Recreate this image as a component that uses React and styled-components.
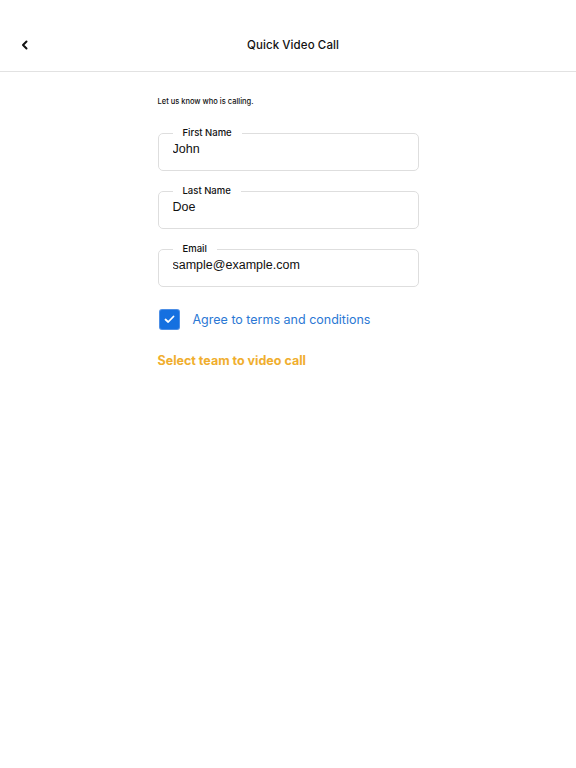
import React from 'react';
import styled, { createGlobalStyle } from 'styled-components';

const GlobalStyle = createGlobalStyle`
    html, body {
        margin: 0;
        padding: 0;
        background: #fff;
    }
    body {
        font-family: Inter, "Noto Sans", sans-serif;
        color: #111;
    }
`;

const Page = styled.div`
    width: 576px;
    min-height: 768px;
    background: #fff;
`;

const Header = styled.header`
    position: relative;
    display: flex;
    align-items: center;
    justify-content: center;
    height: 52px;
    padding-top: 19px;
    border-bottom: 1px solid #e2e2e2;
`;

const BackButton = styled.button`
    position: absolute;
    left: 17px;
    top: 37px;
    display: flex;
    align-items: center;
    justify-content: center;
    width: 16px;
    height: 16px;
    padding: 0;
    border: none;
    background: none;
    color: #111;
`;

const Title = styled.h1`
    margin: 0;
    font-size: 11.5px;
    font-weight: 500;
    letter-spacing: 0.1px;
    padding-left: 10px;
`;

const Content = styled.main`
    display: flex;
    flex-direction: column;
    width: 261px;
    margin: 0 auto;
    padding-top: 25px;
`;

const Intro = styled.p`
    margin: 0 0 22px;
    font-size: 7.5px;
    font-weight: 500;
`;

const Field = styled.fieldset`
    margin: 0 0 15px;
    padding: 0 14px 10px;
    height: 43px;
    box-sizing: border-box;
    border: 1.5px solid #dedede;
    border-radius: 5px;
    display: flex;
    flex-direction: column;
`;

const Legend = styled.legend`
    padding: 0 10px;
    margin-left: 0;
    font-size: 9.5px;
    font-weight: 500;
    line-height: 10px;
`;

const Input = styled.input`
    border: none;
    outline: none;
    padding: 0;
    margin-top: 4px;
    font-family: "Liberation Sans", Arial, sans-serif;
    font-size: 12.5px;
    color: #111;
    background: transparent;
`;

const CheckRow = styled.label`
    display: flex;
    align-items: center;
    gap: 14px;
    margin-top: 8px;
    padding-left: 2px;
`;

const CheckBox = styled.span`
    display: flex;
    align-items: center;
    justify-content: center;
    width: 19px;
    height: 19px;
    border-radius: 2px;
    background: #1570e0;
    box-shadow: 0 0 0 1px #4d8fe6;
`;

const CheckText = styled.span`
    font-size: 12.5px;
    color: #2b78d4;
`;

const TeamLink = styled.a`
    margin-top: 24px;
    font-size: 12.5px;
    font-weight: 700;
    color: #f0ae2e;
    text-decoration: none;
`;

const fields = [
    { label: 'First Name', value: 'John' },
    { label: 'Last Name', value: 'Doe' },
    { label: 'Email', value: 'sample@example.com' },
];

export default function App() {
    return (
        <Page>
            <GlobalStyle />
            <Header>
                <BackButton aria-label="Back">
                    <svg width="10" height="10" viewBox="0 0 10 10">
                        <path d="M6.5 1.5 L3 5 L6.5 8.5" fill="none" stroke="#111" strokeWidth="2" strokeLinecap="round" strokeLinejoin="round" />
                    </svg>
                </BackButton>
                <Title>Quick Video Call</Title>
            </Header>
            <Content>
                <Intro>Let us know who is calling.</Intro>
                {fields.map((f) => (
                    <Field key={f.label}>
                        <Legend>{f.label}</Legend>
                        <Input defaultValue={f.value} />
                    </Field>
                ))}
                <CheckRow>
                    <CheckBox>
                        <svg width="11" height="9" viewBox="0 0 11 9">
                            <path d="M1.5 4.5 L4.2 7 L9.5 1.5" fill="none" stroke="#fff" strokeWidth="1.8" strokeLinecap="round" strokeLinejoin="round" />
                        </svg>
                    </CheckBox>
                    <CheckText>Agree to terms and conditions</CheckText>
                </CheckRow>
                <TeamLink href="#">Select team to video call</TeamLink>
            </Content>
        </Page>
    );
}
